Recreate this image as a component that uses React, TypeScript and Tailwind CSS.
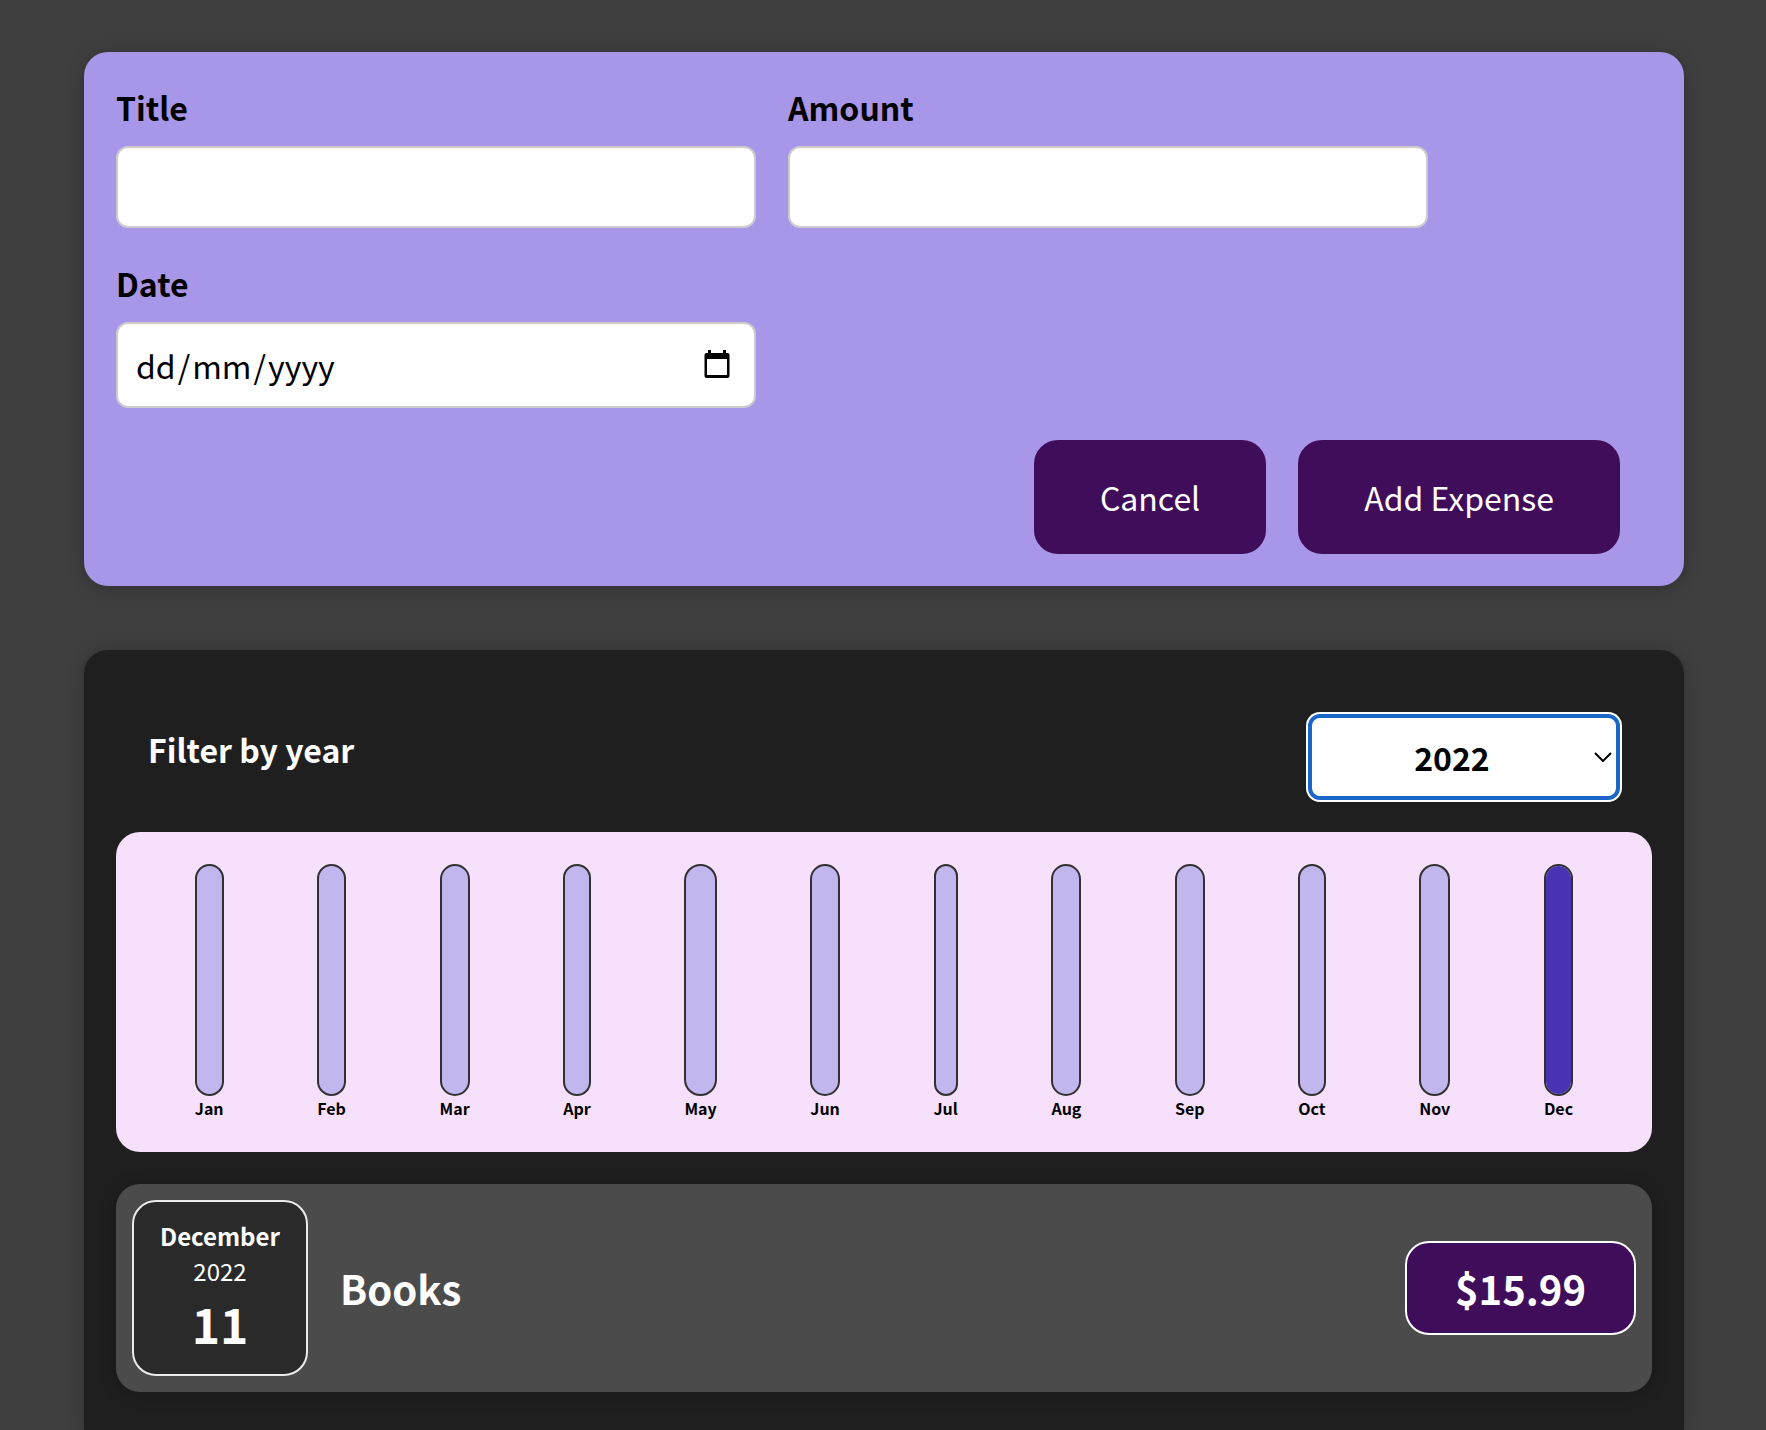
import { useState } from "react";

const months = [
  { label: "Jan", fill: 0 },
  { label: "Feb", fill: 0 },
  { label: "Mar", fill: 0 },
  { label: "Apr", fill: 0 },
  { label: "May", fill: 0 },
  { label: "Jun", fill: 0 },
  { label: "Jul", fill: 0 },
  { label: "Aug", fill: 0 },
  { label: "Sep", fill: 0 },
  { label: "Oct", fill: 0 },
  { label: "Nov", fill: 0 },
  { label: "Dec", fill: 100 },
];

const expenses = [
  { title: "Books", month: "December", year: "2022", day: "11", amount: "$15.99" },
];

const inputClass =
  "block h-[82px] w-full rounded-xl border-2 border-[#cccccc] bg-white px-4 text-[32px] leading-[46px] text-black outline-none";

const labelClass = "mb-4 block text-[32px] leading-[46px] font-bold";

const dateFieldClass =
  "field-sizing-content bg-transparent px-0.5 outline-none placeholder:text-black placeholder:opacity-100";

const buttonClass =
  "rounded-3xl border-2 border-[#400d5a] bg-[#400d5a] px-16 py-8 text-[32px] leading-[46px] text-white";

function CalendarIcon() {
  return (
    <svg viewBox="0 0 26 28" className="h-7 w-[26px]" aria-hidden="true">
      <path
        fill="#000"
        fillRule="evenodd"
        d="M4 0h3v3h12V0h3v3h1.500a2 2 0 0 1 2 2v21a2 2 0 0 1-2 2h-21a2 2 0 0 1-2-2V5a2 2 0 0 1 2-2H4zM3 9v16h20V9z"
      />
    </svg>
  );
}

function DateField() {
  return (
    <div className="flex h-[86px] items-center rounded-xl border-2 border-[#cccccc] bg-white pr-6 pl-4 text-[32px] leading-[46px]">
      <input id="date" type="text" inputMode="numeric" maxLength={2} placeholder="dd" className={dateFieldClass} />
      <span>/</span>
      <input aria-label="Month" type="text" inputMode="numeric" maxLength={2} placeholder="mm" className={dateFieldClass} />
      <span>/</span>
      <input aria-label="Year" type="text" inputMode="numeric" maxLength={4} placeholder="yyyy" className={dateFieldClass} />
      <button type="button" aria-label="Open calendar" className="mb-0.5 ml-auto">
        <CalendarIcon />
      </button>
    </div>
  );
}

function ExpenseForm() {
  return (
    <form
      className="rounded-3xl bg-[#a896e8] p-8 text-black shadow-[0_2px_16px_rgba(0,0,0,0.25)]"
      onSubmit={(e) => e.preventDefault()}
    >
      <div className="flex flex-wrap gap-8">
        <div className="w-[640px] max-w-full">
          <label htmlFor="title" className={labelClass}>Title</label>
          <input id="title" type="text" className={inputClass} />
        </div>
        <div className="w-[640px] max-w-full">
          <label htmlFor="amount" className={labelClass}>Amount</label>
          <input id="amount" type="text" inputMode="decimal" className={inputClass} />
        </div>
        <div className="w-[640px] max-w-full">
          <label htmlFor="date" className={labelClass}>Date</label>
          <DateField />
        </div>
      </div>
      <div className="mt-8 flex flex-wrap justify-end gap-8 pr-8">
        <button type="button" className={buttonClass}>Cancel</button>
        <button type="submit" className={buttonClass}>Add Expense</button>
      </div>
    </form>
  );
}

function YearFilter() {
  const [year, setYear] = useState("2022");
  return (
    <div className="flex items-start justify-between px-8">
      <label htmlFor="year" className="pt-3 text-[32px] leading-[46px] font-bold text-white">
        Filter by year
      </label>
      <div className="relative">
        <select
          id="year"
          value={year}
          onChange={(e) => setYear(e.target.value)}
          className="block h-[86px] w-[312px] appearance-none rounded-xl border-4 border-[#1a66c9] bg-white pr-6 text-center text-[32px] font-bold text-black ring-2 ring-white outline-none [text-align-last:center]"
        >
          <option>2022</option>
          <option>2021</option>
          <option>2020</option>
          <option>2019</option>
        </select>
        <svg
          viewBox="0 0 18 10"
          className="pointer-events-none absolute top-[38px] right-2 h-[10px] w-[18px]"
          fill="none"
          stroke="#000"
          strokeWidth="2"
          aria-hidden="true"
        >
          <path d="M1 1l8 8 8-8" />
        </svg>
      </div>
    </div>
  );
}

function Chart() {
  return (
    <div className="mt-8 flex h-80 justify-around rounded-3xl bg-[#f7e0fc] p-8">
      {months.map((m) => (
        <div key={m.label} className="flex flex-col">
          <div className="flex h-[232px] w-full flex-col justify-end overflow-hidden rounded-3xl border-2 border-[#313131] bg-[#c2b6ee]">
            <div className="bg-[#4933b2]" style={{ height: `${m.fill}%` }} />
          </div>
          <div className="text-center text-[16px] leading-6 font-bold text-black">{m.label}</div>
        </div>
      ))}
    </div>
  );
}

export default function App() {
  return (
    <div className="flex min-h-screen flex-col bg-[#3f3f3f] pt-[52px] pr-[82px] pl-[84px] font-['Noto_Sans_CJK_JP',sans-serif]">
      <ExpenseForm />
      <main className="mt-16 flex-1 rounded-t-3xl bg-[#1f1f1f] px-8 pt-16 shadow-[0_2px_16px_rgba(0,0,0,0.25)]">
        <YearFilter />
        <Chart />
        <ul>
          {expenses.map((e) => (
            <li
              key={e.title}
              className="mt-8 flex items-center gap-8 rounded-3xl bg-[#4b4b4b] p-4 text-white shadow-[0_2px_16px_rgba(0,0,0,0.25)]"
            >
              <div className="flex size-44 flex-col items-center justify-center rounded-3xl border-2 border-[#ececec] bg-[#2a2a2a]">
                <div className="text-[24px] leading-[35px] font-bold">{e.month}</div>
                <div className="text-[24px] leading-[35px]">{e.year}</div>
                <div className="text-[48px] leading-[70px] font-bold">{e.day}</div>
              </div>
              <h2 className="flex-1 text-[40px] leading-[58px] font-bold">{e.title}</h2>
              <div className="rounded-3xl border-2 border-white bg-[#400d5a] px-12 py-4 text-[40px] leading-[58px] font-bold">
                {e.amount}
              </div>
            </li>
          ))}
        </ul>
      </main>
    </div>
  );
}
